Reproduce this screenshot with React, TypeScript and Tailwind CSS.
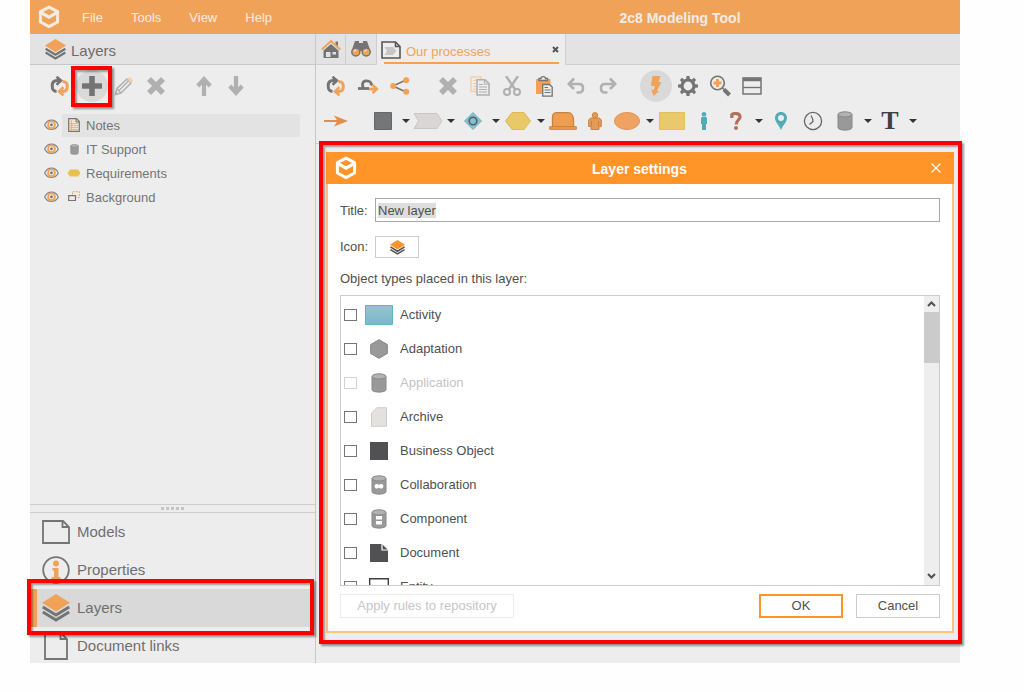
import { useEffect, useRef, type ReactNode } from 'react'

const GREY = '#747474'
const PALE = '#b0b0b0'
const ORANGE = '#f0a358'

function Svg({ w, h, children, className }: { w: number; h: number; children: ReactNode; className?: string }) {
  return (
    <svg width={w} height={h} viewBox={`0 0 ${w} ${h}`} fill="none" aria-hidden="true" className={`shrink-0 ${className ?? ''}`}>
      {children}
    </svg>
  )
}

function Logo({ color }: { color: string }) {
  return (
    <Svg w={22} h={24}>
      <path d="M11 2.2 19.6 6.6V17L11 21.6 2.4 17V6.6Z" stroke={color} strokeWidth="3" strokeLinejoin="round" />
      <path d="M3 7.6 11 12.2 19 7.6" stroke={color} strokeWidth="3.2" />
    </Svg>
  )
}

function LayersIcon({ size, top = ORANGE, line = GREY }: { size: number; top?: string; line?: string }) {
  return (
    <svg width={size} height={size} viewBox="0 0 28 28" fill="none" aria-hidden="true" className="shrink-0">
      <path d="M14 0 28 8.800 14 17.600 0 8.800Z" fill={top} />
      <path d="M.8 13 14 21 27.2 13M.8 18 14 26 27.2 18" stroke={line} strokeWidth="2.8" />
    </svg>
  )
}

function RefreshIcon() {
  return (
    <Svg w={20} h={20}>
      <path d="M6.500 15.500C3 15.200 2.200 13.500 2.200 9.800 2.200 6 3.800 4.600 7 4.600H10" stroke={GREY} strokeWidth="3" />
      <path d="M6.500.800 11 4.600 6.500 8.800" stroke={GREY} strokeWidth="2.600" />
      <path d="M12.500 5.500C16.500 5.800 17.300 7.500 17.300 10.500 17.300 14 15.800 15.400 13 15.400H10" stroke={ORANGE} strokeWidth="3" />
      <path d="M13.500 11.200 9 15.400 13.500 19.400" stroke={ORANGE} strokeWidth="2.600" />
    </Svg>
  )
}

function CrossIcon() {
  return (
    <Svg w={20} h={20}>
      <path d="M3 3 17 17M17 3 3 17" stroke={PALE} strokeWidth="5.600" />
    </Svg>
  )
}

function PlusIcon() {
  return (
    <Svg w={20} h={20}>
      <path d="M10 0V20M0 10H20" stroke={GREY} strokeWidth="5.600" />
    </Svg>
  )
}

function PencilIcon() {
  return (
    <Svg w={20} h={20}>
      <path d="M1.500 18.500 3 12.500 13 3 17 7 7 17Z" stroke={PALE} strokeWidth="1.500" />
      <path d="M5 14.500 14.500 5M3 13 7 17" stroke={PALE} strokeWidth="1.300" />
      <path d="M13 3 15.500.8 19.200 4.500 17 7Z" fill="#f6cfa6" />
      <path d="M1 19 2 15.500 4.500 18Z" fill={PALE} />
    </Svg>
  )
}

function ArrowIcon({ down = false }: { down?: boolean }) {
  return (
    <Svg w={16} h={20} className={down ? 'rotate-180' : ''}>
      <path d="M8 20V3.500M1.800 10 8 3.200 14.200 10" stroke={PALE} strokeWidth="4.200" />
    </Svg>
  )
}

function LinkArrowIcon() {
  return (
    <Svg w={22} h={16}>
      <path d="M1 10.500H12" stroke={GREY} strokeWidth="2.800" />
      <path d="M6.500 10.500C4.500 7 5.500 3 9 2.800 13 2.600 15 5 14 7.500" stroke={GREY} strokeWidth="2.800" />
      <path d="M12 11H18" stroke={ORANGE} strokeWidth="2.800" />
      <path d="M15.500 7 19.800 11 15.500 15" stroke={ORANGE} strokeWidth="2.600" />
    </Svg>
  )
}

function ShareIcon() {
  return (
    <Svg w={20} h={18}>
      <path d="M3 9 16 3M3 9 16 15" stroke={GREY} strokeWidth="1.400" />
      <circle cx="3.200" cy="9" r="3" fill={ORANGE} />
      <circle cx="16.200" cy="3.200" r="3" fill={ORANGE} />
      <circle cx="16.200" cy="14.800" r="3" fill={ORANGE} />
    </Svg>
  )
}

function CopyIcon() {
  return (
    <Svg w={20} h={20}>
      <path d="M6 15.500H1V1H11V3" stroke="#f6cfa6" strokeWidth="1.500" />
      <path d="M3 4.500H6M3 7.500H6M3 10.500H6M3 13H6" stroke="#f6cfa6" />
      <path d="M7 3.800H15L19 7.500V19H7Z" stroke={PALE} strokeWidth="1.600" fill="#ededed" />
      <path d="M14.500 4V8H19M9 8.500H13M9 11H17M9 13.500H17M9 16H17" stroke={PALE} strokeWidth="1.200" />
    </Svg>
  )
}

function ScissorsIcon() {
  return (
    <Svg w={18} h={20}>
      <path d="M3 0 12.500 14M15 0 5.500 14" stroke={PALE} strokeWidth="2.400" />
      <circle cx="4" cy="16" r="3" stroke={PALE} strokeWidth="2" />
      <circle cx="14" cy="16" r="3" stroke={PALE} strokeWidth="2" />
    </Svg>
  )
}

function PasteIcon() {
  return (
    <Svg w={18} h={22}>
      <rect x="1" y="4" width="14.500" height="15" fill={ORANGE} />
      <path d="M4 5.500V3.500H6C6 1 10.500 1 10.500 3.500H12.500V5.500Z" fill="#ededed" stroke={GREY} strokeWidth="1.400" />
      <path d="M7.700 9.500H14.500L17.200 12V21.200H7.700Z" fill="#ededed" stroke={GREY} strokeWidth="1.300" />
      <path d="M9.500 12.500H13M9.500 15H15.500M9.500 17.500H15.500" stroke={GREY} />
    </Svg>
  )
}

function UndoIcon({ redo = false }: { redo?: boolean }) {
  return (
    <Svg w={18} h={18} className={redo ? '-scale-x-100' : ''}>
      <path d="M2 7H12C15 7 16 8.500 16 11S15 15.500 12 15.500H9.500" stroke={PALE} strokeWidth="2.600" />
      <path d="M7 1.500 1.800 7 7 12" stroke={PALE} strokeWidth="2.600" />
    </Svg>
  )
}

function BoltIcon() {
  return (
    <Svg w={12} h={20}>
      <path d="M2.500 0H10.500L8.500 6H11.500L7 14.500 9 15.200 3.500 20 1.300 13.500 3.500 14 5 10H1Z" fill={ORANGE} />
    </Svg>
  )
}

function GearIcon() {
  return (
    <Svg w={20} h={20}>
      <circle cx="10" cy="10" r="6" stroke={GREY} strokeWidth="3.200" />
      {[0, 45, 90, 135, 180, 225, 270, 315].map((angle) => (
        <path key={angle} d="M8.200 3 8.500 0H11.500L11.800 3Z" fill={GREY} transform={`rotate(${angle} 10 10)`} />
      ))}
    </Svg>
  )
}

function ZoomIcon() {
  return (
    <Svg w={22} h={22}>
      <circle cx="8.500" cy="8" r="6.800" stroke={GREY} strokeWidth="1.600" />
      <path d="M8.500 4V12M4.500 8H12.500" stroke={ORANGE} strokeWidth="3" />
      <path d="M13 12.500 15.500 15" stroke={GREY} strokeWidth="1.600" />
      <path d="M15 14.500 20.500 20" stroke={GREY} strokeWidth="4" />
    </Svg>
  )
}

function PanelIcon() {
  return (
    <Svg w={20} h={18}>
      <path d="M1 1H19V17H1Z" stroke={GREY} strokeWidth="1.500" />
      <path d="M1 2.500H19" stroke={GREY} strokeWidth="3.500" />
      <path d="M1 10.500H19" stroke={GREY} strokeWidth="1.400" />
    </Svg>
  )
}

function HomeIcon() {
  return (
    <Svg w={20} h={20}>
      <path d="M2.500 11.500 10 5 17.500 11.500V19H2.500Z" fill={GREY} />
      <path d="M14.500 2.500H17V7H14.500Z" fill={GREY} />
      <path d="M5 13H9.500V18H5ZM11.500 13H15V15.500H11.500Z" fill="#e2e2e2" />
      <path d="M.800 10.500 10 2 19.200 10.500" stroke={ORANGE} strokeWidth="2" />
    </Svg>
  )
}

function BinocularsIcon() {
  return (
    <Svg w={20} h={18}>
      <path d="M4 1H8V3H12V1H16L19.500 11H.500Z" fill={GREY} />
      <circle cx="4.800" cy="12" r="4" fill={ORANGE} stroke={GREY} strokeWidth="1.500" />
      <circle cx="15.200" cy="12" r="4" fill={ORANGE} stroke={GREY} strokeWidth="1.500" />
      <path d="M3 11.500 5 10M13.500 11.500 15.500 10" stroke="#fff" />
    </Svg>
  )
}

function TabPageIcon() {
  return (
    <Svg w={20} h={18}>
      <path d="M1 1H14.500L19 5.500V17H1Z" stroke="#555" strokeWidth="1.600" />
      <path d="M14.500 1V5.500H19" stroke="#555" strokeWidth="1.600" />
      <path d="M3.500 6H12L15.500 10 12 14H3.500L6 10Z" fill="#c6c6c6" />
    </Svg>
  )
}

function EyeIcon() {
  return (
    <Svg w={15} h={12}>
      <path d="M.700 6C3.500-.500 11.500-.500 14.300 6 11.500 12 3.500 12 .700 6Z" stroke="#858585" strokeWidth="1.200" />
      <circle cx="7.500" cy="5.800" r="3.400" stroke={ORANGE} strokeWidth="1.900" />
      <circle cx="7.500" cy="5.800" r="1.400" fill={GREY} />
    </Svg>
  )
}

function NoteIcon() {
  return (
    <Svg w={12} h={14}>
      <path d="M.700.700H8.500L11.300 3.500V13.300H.700Z" stroke={GREY} strokeWidth="1.200" fill="#f3e2d0" />
      <path d="M8 1V4H11" stroke={GREY} />
      <path d="M3.500 2V12.500M2 5.500H10M2 7.500H10M2 9.500H10M2 11.500H10" stroke={ORANGE} strokeWidth=".700" />
    </Svg>
  )
}

function Cylinder({ w, h, children }: { w: number; h: number; children?: ReactNode }) {
  return (
    <svg width={w} height={h} viewBox="0 0 16 20" fill="none" aria-hidden="true">
      <path d="M1 3.500V16.500C1 20 15 20 15 16.500V3.500Z" fill="#999" stroke="#888" />
      <ellipse cx="8" cy="3.400" rx="7" ry="2.600" fill="#b2b2b2" stroke="#888" />
      {children}
    </svg>
  )
}

function PageIcon({ wide }: { wide?: boolean }) {
  return wide ? (
    <Svg w={28} h={24}>
      <path d="M1 1H21L27 7V23H1Z" stroke={GREY} strokeWidth="1.800" />
      <path d="M20.500 1V7H27" stroke={GREY} strokeWidth="1.800" />
    </Svg>
  ) : (
    <Svg w={24} h={28}>
      <path d="M1 1H17L23 7V27H1Z" stroke={GREY} strokeWidth="1.800" />
      <path d="M16.500 1V7H23" stroke={GREY} strokeWidth="1.800" />
    </Svg>
  )
}

function InfoIcon() {
  return (
    <Svg w={28} h={28}>
      <circle cx="14" cy="14" r="12.800" stroke={GREY} strokeWidth="1.800" />
      <circle cx="14" cy="7.500" r="3" fill={ORANGE} />
      <path d="M10.500 12H16.500V21H18.500V23.500H9.500V21H12V14.500H10.500Z" fill={ORANGE} />
    </Svg>
  )
}

function Tool({ label, children, active }: { label: string; children: ReactNode; active?: boolean }) {
  return (
    <button
      type="button"
      aria-label={label}
      className={`flex h-8 w-8 shrink-0 items-center justify-center rounded-full ${active ? 'bg-[#d9d9d9]' : ''}`}
    >
      {children}
    </button>
  )
}

function Caret({ label }: { label: string }) {
  return (
    <button type="button" aria-haspopup="menu" aria-label={`${label} variants`} className="flex h-8 w-[13px] shrink-0 items-center justify-center">
      <Svg w={8} h={4}>
        <path d="M0 0H8L4 4Z" fill="#333" />
      </Svg>
    </button>
  )
}

const shapes: { label: string; menu?: boolean; icon: ReactNode }[] = [
  { label: 'Business object', menu: true, icon: <Svg w={18} h={18}><path d="M.500.500H17.500V17.500H.500Z" fill="#757677" stroke="#666" /></Svg> },
  { label: 'Process', menu: true, icon: <Svg w={30} h={16}><path d="M1 .500H24L29 8 24 15.500H1L5.500 8Z" fill="#dad6d6" stroke="#cac6c6" /></Svg> },
  {
    label: 'Gateway',
    menu: true,
    icon: (
      <Svg w={18} h={18}>
        <path d="M9 .500 17.500 9 9 17.500.500 9Z" fill="#88c0cd" stroke="#6fb3c2" />
        <circle cx="9" cy="9" r="3.800" stroke="#4d6066" strokeWidth="1.600" />
      </Svg>
    ),
  },
  { label: 'Requirement', menu: true, icon: <Svg w={26} h={18}><path d="M7 .500H19L25.500 9 19 17.500H7L.500 9Z" fill="#e8c867" stroke="#dfb952" /></Svg> },
  {
    label: 'Role',
    icon: (
      <Svg w={28} h={18}>
        <path d="M3.500 15V5C3.500 2 5 .700 8 .700H19C22.500.700 24.500 4 24.500 8V15Z" fill="#ee9d51" stroke="#c9833d" strokeWidth="1.300" />
        <path d="M.700 14.700H27.300V17.300H.700Z" fill="#ee9d51" stroke="#c9833d" />
      </Svg>
    ),
  },
  {
    label: 'Actor',
    icon: (
      <Svg w={14} h={18}>
        <path d="M2.500 6H11.500L13.300 8V14.500H11V17.500H3V14.500H.700V8Z" fill="#e59a55" stroke="#c9833d" />
        <path d="M3.500 9V14M10.500 9V14" stroke="#c9833d" />
        <circle cx="7" cy="3.300" r="2.700" fill="#e59a55" stroke="#c9833d" />
      </Svg>
    ),
  },
  { label: 'Event', menu: true, icon: <Svg w={26} h={18}><ellipse cx="13" cy="9" rx="12.500" ry="8.500" fill="#f0a262" stroke="#e3924e" /></Svg> },
  { label: 'Note', icon: <Svg w={26} h={18}><path d="M.500.500H25.500V17.500H.500Z" fill="#e8ca6d" stroke="#e3bf58" /></Svg> },
  {
    label: 'Person',
    icon: (
      <Svg w={6} h={18}>
        <circle cx="3" cy="2.300" r="2.300" fill="#53abb3" />
        <path d="M1 4.800H5L6 6V12H5V18H1V12H0V6Z" fill="#53abb3" />
      </Svg>
    ),
  },
  {
    label: 'Question',
    menu: true,
    icon: (
      <Svg w={12} h={18}>
        <path d="M1.800 6V2.800C4 .800 10 .800 10 5 10 8 6.200 8 6.200 12.500" stroke="#b3705c" strokeWidth="3.200" />
        <circle cx="6" cy="16" r="2" fill="#b3705c" />
      </Svg>
    ),
  },
  {
    label: 'Location',
    icon: (
      <Svg w={12} h={18}>
        <path fillRule="evenodd" d="M6 0C2.500 0 0 2.600 0 6 0 10 4 13 6 18 8 13 12 10 12 6 12 2.600 9.500 0 6 0ZM6 3A3 3 0 1 1 6 9 3 3 0 0 1 6 3Z" fill="#53abb3" />
      </Svg>
    ),
  },
  {
    label: 'Timer',
    icon: (
      <Svg w={20} h={20}>
        <circle cx="10" cy="10" r="8.600" stroke="#666" strokeWidth="1.300" />
        <path d="M8 4.500C9.500 7 10 9 10 10.500L6.500 13.500" stroke="#666" strokeWidth="1.300" />
      </Svg>
    ),
  },
  { label: 'Application', menu: true, icon: <Cylinder w={16} h={20} /> },
  {
    label: 'Text',
    menu: true,
    icon: <span className="font-['Liberation_Serif',serif] text-[26px] leading-8 font-bold text-[#404040]">T</span>,
  },
]

const layers: { name: string; icon: ReactNode }[] = [
  { name: 'Notes', icon: <NoteIcon /> },
  { name: 'IT Support', icon: <Cylinder w={9} h={11} /> },
  { name: 'Requirements', icon: <Svg w={14} h={8}><path d="M3 .500H11L13.500 4 11 7.500H3L.500 4Z" fill="#e8c14e" /></Svg> },
  {
    name: 'Background',
    icon: (
      <Svg w={12} h={12}>
        <path d="M4.500 3.500V.700H11.300V6.500H8.500" stroke={ORANGE} strokeDasharray="2 1" />
        <path d="M.700 4.700H7.500V9.500H.700Z" stroke={GREY} strokeWidth="1.200" />
      </Svg>
    ),
  },
]

const objectTypes: { name: string; disabled?: boolean; icon: ReactNode }[] = [
  {
    name: 'Activity',
    icon: (
      <Svg w={28} h={20}>
        <defs>
          <linearGradient id="activity" x1="0" y1="0" x2="0" y2="1">
            <stop offset="0" stopColor="#93c4cf" />
            <stop offset="1" stopColor="#7cb8ca" />
          </linearGradient>
        </defs>
        <path d="M.500.500H27.500V19.500H.500Z" fill="url(#activity)" stroke="#5fb3c6" />
      </Svg>
    ),
  },
  { name: 'Adaptation', icon: <Svg w={18} h={20}><path d="M9 .700 17.300 5.500V14.500L9 19.300.700 14.500V5.500Z" fill="#999" stroke="#848484" /></Svg> },
  { name: 'Application', disabled: true, icon: <Cylinder w={16} h={20} /> },
  { name: 'Archive', icon: <Svg w={16} h={20}><path d="M6 .700H15.500V19.300H.500V6Z" fill="#e5e1de" stroke="#d0ccc8" /></Svg> },
  { name: 'Business Object', icon: <Svg w={18} h={18}><path d="M0 0H18V18H0Z" fill="#515153" /></Svg> },
  {
    name: 'Collaboration',
    icon: <Cylinder w={16} h={20}><path d="M5.500 9H6.500L8 10 9.500 9H10.500C13 9 13 13.500 10.500 13.500H9.500L8 12.500 6.500 13.500H5.500C3 13.500 3 9 5.500 9Z" fill="#fff" /></Cylinder>,
  },
  {
    name: 'Component',
    icon: <Cylinder w={16} h={20}><path d="M5 7H11V10.500H5ZM5 12H11V15.500H5Z" fill="#fff" /></Cylinder>,
  },
  {
    name: 'Document',
    icon: (
      <Svg w={18} h={18}>
        <path d="M0 0H12L18 6V18H0Z" fill="#515153" />
        <path d="M12 0V6H18" stroke="#fff" strokeWidth="1.200" />
      </Svg>
    ),
  },
  { name: 'Entity', icon: <Svg w={20} h={18}><path d="M.700.700H19.300V17.300H.700Z" stroke="#404040" strokeWidth="1.400" /></Svg> },
]

const sections: { name: string; icon: ReactNode }[] = [
  { name: 'Models', icon: <PageIcon wide /> },
  { name: 'Properties', icon: <InfoIcon /> },
  { name: 'Layers', icon: <LayersIcon size={28} /> },
  { name: 'Document links', icon: <PageIcon /> },
]

function Highlight({ className }: { className: string }) {
  return (
    <span
      aria-hidden="true"
      className={`pointer-events-none absolute z-10 border-4 border-[#fe0000] shadow-[2px_2px_2px_rgba(0,0,0,0.4),inset_2px_2px_2px_rgba(0,0,0,0.35)] ${className}`}
    />
  )
}

function Sidebar() {
  return (
    <aside className="flex w-[286px] shrink-0 flex-col border-r border-[#c8c8c8] bg-[#ededed]">
      <h2 className="flex h-[31px] shrink-0 items-center gap-[5px] border-b border-[#c8c8c8] bg-[#e3e3e3] pl-[15px] text-[15px] text-[#6c6c6c]">
        <LayersIcon size={21} />
        <span className="pt-1">Layers</span>
      </h2>
      <div className="flex h-[42px] shrink-0 items-center pl-[14px]">
        <Tool label="Refresh"><RefreshIcon /></Tool>
        <div className="relative">
          <Tool label="Add layer" active><PlusIcon /></Tool>
          <Highlight className="-top-1 -right-1 -bottom-[5px] -left-[5px]" />
        </div>
        <Tool label="Edit layer"><PencilIcon /></Tool>
        <Tool label="Delete layer"><CrossIcon /></Tool>
        <div className="ml-4 flex">
          <Tool label="Move up"><ArrowIcon /></Tool>
          <Tool label="Move down"><ArrowIcon down /></Tool>
        </div>
      </div>
      <ul className="min-h-0 flex-1 pt-1.5 pr-[15px] pl-[14px] text-[13px] text-[#757575]">
        {layers.map((layer, i) => (
          <li key={layer.name} className="flex h-6 items-center gap-[3px]">
            <button type="button" aria-label={`Toggle ${layer.name}`} className="shrink-0"><EyeIcon /></button>
            <button type="button" className={`flex h-[23px] flex-1 items-center gap-1 pl-1 text-left ${i === 0 ? 'bg-[#e3e3e3]' : ''}`}>
              <span className="flex w-4 justify-center">{layer.icon}</span>
              <span className="pt-0.5">{layer.name}</span>
            </button>
          </li>
        ))}
      </ul>
      <div className="flex h-[9px] shrink-0 items-center justify-center gap-0.5 border-y border-[#cccccc]">
        {[0, 1, 2, 3, 4].map((n) => (
          <span key={n} className="h-[3px] w-[3px] bg-[#c4c4c4]" />
        ))}
      </div>
      <nav className="relative h-[150px] shrink-0">
        <ul className="h-full overflow-hidden text-[15px] text-[#6f6f6f]">
          {sections.map((s) => (
            <li key={s.name}>
              <button
                type="button"
                className={`flex h-[38px] w-full items-center gap-[7px] border-l-[7px] pl-[5px] text-left ${s.name === 'Layers' ? 'border-[#f0a358] bg-[#d9d9d9]' : 'border-transparent'}`}
              >
                <span className="flex w-7 justify-center">{s.icon}</span>
                {s.name}
              </button>
            </li>
          ))}
        </ul>
        <Highlight className="top-[66px] right-px -left-[3px] h-14" />
      </nav>
    </aside>
  )
}

function LayerDialog() {
  const title = useRef<HTMLInputElement>(null)
  useEffect(() => {
    title.current?.focus({ preventScroll: true })
    title.current?.select()
  }, [])

  return (
    <div
      role="dialog"
      aria-labelledby="dialog-title"
      className="flex h-full flex-col border-2 border-t-0 border-[#ffc07e] bg-white text-[13px] text-[#505050]"
    >
      <header className="-mx-0.5 grid h-8 shrink-0 grid-cols-[1fr_auto_1fr] items-center bg-[#ff9429] pr-2.5 pl-[9px] text-white">
        <Logo color="#ffffff" />
        <h2 id="dialog-title" className="pt-0.5 text-[14px] font-bold">Layer settings</h2>
        <button type="button" aria-label="Close" className="flex h-4 w-4 items-center justify-center justify-self-end">
          <Svg w={10} h={10}><path d="M.500.500 9.500 9.500M9.500.500.500 9.500" stroke="#fff" strokeWidth="1.200" /></Svg>
        </button>
      </header>
      <div className="flex min-h-0 flex-1 flex-col px-3 pt-3.5 pb-[13px]">
        <div className="flex items-center">
          <label htmlFor="layer-title" className="w-[35px] pt-0.5">Title:</label>
          <input
            id="layer-title"
            ref={title}
            defaultValue="New layer"
            className="h-6 min-w-0 flex-1 rounded-none border border-[#a8a8a8] bg-white px-0.5 leading-[18px] outline-none selection:bg-[#dedede] selection:text-[#505050]"
          />
        </div>
        <div className="mt-3.5 flex items-center">
          <label htmlFor="layer-icon" className="w-[35px]">Icon:</label>
          <button id="layer-icon" type="button" className="flex h-[22px] w-11 items-center justify-center border border-[#cccccc]">
            <LayersIcon size={15} top="#ff9429" line="#505050" />
          </button>
        </div>
        <p className="mt-[11px] leading-5">Object types placed in this layer:</p>
        <div className="mt-1.5 flex min-h-0 flex-1 border border-[#cccccc]">
          <ul className="min-h-0 flex-1 overflow-y-auto pt-0.5 [scrollbar-width:none]">
            {objectTypes.map((t) => (
              <li key={t.name}>
                <label className={`flex h-[34px] items-center pl-[3px] ${t.disabled ? 'text-[#c4c4c4]' : ''}`}>
                  <input
                    type="checkbox"
                    disabled={t.disabled}
                    className="h-3 w-[13px] shrink-0 appearance-none border border-[#777777] bg-white checked:bg-[#777777] disabled:border-[#d4d4d4]"
                  />
                  <span className="mr-[7px] ml-2 flex w-7 justify-center">{t.icon}</span>
                  {t.name}
                </label>
              </li>
            ))}
          </ul>
          <div className="flex w-[15px] flex-col bg-[#eeeeee]">
            <button type="button" aria-label="Scroll up" className="flex h-4 items-center justify-center">
              <Svg w={9} h={6}><path d="M1 5 4.500 1.500 8 5" stroke="#505050" strokeWidth="2" /></Svg>
            </button>
            <div className="h-[51px] bg-[#cbcbcb]" />
            <button type="button" aria-label="Scroll down" className="mt-auto flex h-[18px] items-center justify-center">
              <Svg w={9} h={6}><path d="M1 1 4.500 4.500 8 1" stroke="#505050" strokeWidth="2" /></Svg>
            </button>
          </div>
        </div>
        <footer className="mt-2 flex shrink-0 gap-[13px]">
          <button type="button" disabled className="mr-auto h-6 w-[174px] border border-[#ececec] text-[#c6c6c6]">Apply rules to repository</button>
          <button type="button" className="h-6 w-[84px] border-2 border-[#ff9429]">OK</button>
          <button type="button" className="h-6 w-[84px] border border-[#cccccc]">Cancel</button>
        </footer>
      </div>
    </div>
  )
}

function Workspace() {
  return (
    <main className="flex min-w-0 flex-1 flex-col bg-[#ededed]">
      <div role="tablist" className="flex h-[31px] shrink-0">
        <button type="button" role="tab" aria-label="Home" className="flex w-[30px] items-center justify-center border-r border-b border-[#cfcfcf] bg-[#e3e3e3]"><HomeIcon /></button>
        <button type="button" role="tab" aria-label="Search" className="flex w-[31px] items-center justify-center border-r border-b border-[#cfcfcf] bg-[#e3e3e3]"><BinocularsIcon /></button>
        <div className="relative flex w-[189px] items-center border-r border-[#cfcfcf] pr-1.5 pl-1">
          <button type="button" role="tab" aria-selected="true" className="flex flex-1 items-center gap-[5px] text-[13px] text-[#f0a358]">
            <TabPageIcon />
            <span className="pt-1">Our processes</span>
          </button>
          <button type="button" aria-label="Close tab">
            <Svg w={7} h={7}><path d="M1 1 6 6M6 1 1 6" stroke="#555" strokeWidth="2" /></Svg>
          </button>
          <span className="absolute right-1.5 bottom-px left-[7px] h-0.5 bg-[#f0a358]" />
        </div>
        <div className="flex-1 border-b border-[#cfcfcf] bg-[#e3e3e3]" />
      </div>
      <div role="toolbar" aria-label="Editing" className="flex h-[42px] shrink-0 items-center gap-4 pl-1">
        <div className="flex">
          <Tool label="Refresh"><RefreshIcon /></Tool>
          <Tool label="Connect"><LinkArrowIcon /></Tool>
          <Tool label="Share"><ShareIcon /></Tool>
        </div>
        <div className="flex">
          <Tool label="Delete"><CrossIcon /></Tool>
          <Tool label="Copy"><CopyIcon /></Tool>
          <Tool label="Cut"><ScissorsIcon /></Tool>
          <Tool label="Paste"><PasteIcon /></Tool>
          <Tool label="Undo"><UndoIcon /></Tool>
          <Tool label="Redo"><UndoIcon redo /></Tool>
        </div>
        <div className="flex">
          <Tool label="Quick mode" active><BoltIcon /></Tool>
          <Tool label="Settings"><GearIcon /></Tool>
          <Tool label="Zoom in"><ZoomIcon /></Tool>
          <Tool label="Panels"><PanelIcon /></Tool>
        </div>
      </div>
      <div role="toolbar" aria-label="Shapes" className="flex h-[37px] shrink-0 items-center border-b border-[#cfcfcf] pb-2 pl-1">
        <div className="mr-[15px]">
          <Tool label="Arrow">
            <Svg w={24} h={12}>
              <path d="M0 6H16" stroke="#e08f4b" strokeWidth="2" />
              <path d="M10 .500 24 6 10 11.500 13.500 6Z" fill="#e08f4b" />
            </Svg>
          </Tool>
        </div>
        {shapes.map((s) => (
          <div key={s.label} className="flex">
            <Tool label={s.label}>{s.icon}</Tool>
            {s.menu && <Caret label={s.label} />}
          </div>
        ))}
      </div>
      <div className="relative min-h-0 flex-1">
        <div className="absolute -top-[3px] -right-0.5 bottom-[19px] left-[3px] pt-[11px] pr-2 pb-[11px] pl-[7px]">
          <LayerDialog />
          <Highlight className="inset-0" />
        </div>
      </div>
    </main>
  )
}

export default function App() {
  return (
    <div className="flex h-screen min-h-[480px] flex-col bg-[#fefefe] pr-16 pb-[29px] pl-[30px] font-['Liberation_Sans',Arial,sans-serif]">
      <header className="flex h-[34px] shrink-0 items-center bg-[#f0a358] pl-2 text-[#f3ece4]">
        <Logo color="#f3ece4" />
        <nav className="flex w-[340px] gap-7 pt-0.5 pl-[22px] text-[13px]">
          <a href="#file">File</a>
          <a href="#tools">Tools</a>
          <a href="#view">View</a>
          <a href="#help">Help</a>
        </nav>
        <h1 className="flex-1 pt-0.5 text-center text-[14px] font-bold">2c8 Modeling Tool</h1>
      </header>
      <div className="flex min-h-0 flex-1">
        <Sidebar />
        <Workspace />
      </div>
    </div>
  )
}
